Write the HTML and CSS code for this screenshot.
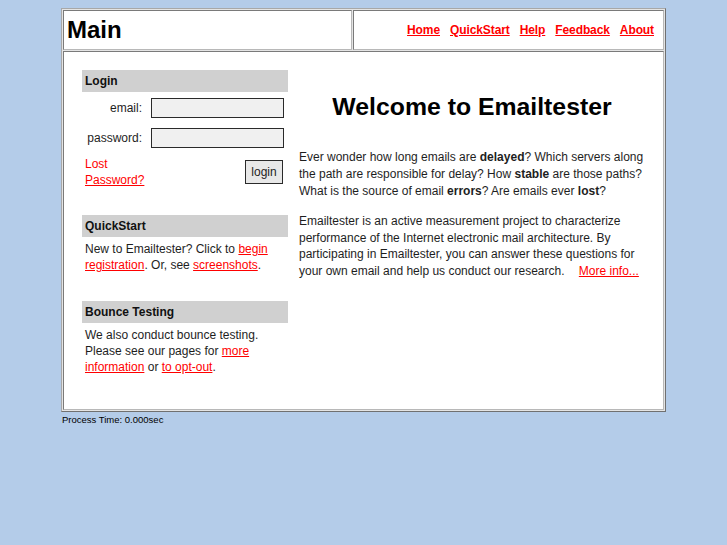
FILE: index.html
```html
<!DOCTYPE html>
<html>
<head>
<meta charset="utf-8">
<title>Emailtester - Main</title>
<link rel="stylesheet" href="styles.css">
</head>
<body>
<div class="frame">
  <div class="cell brand">Main</div>
  <div class="cell nav">
    <a href="#">Home</a>
    <a href="#">QuickStart</a>
    <a href="#">Help</a>
    <a href="#">Feedback</a>
    <a href="#">About</a>
  </div>
  <div class="cell content">
    <div class="sidebar">
      <div class="box-title">Login</div>
      <div class="login-grid">
        <label class="lbl">email:</label>
        <input class="field" type="text">
        <label class="lbl">password:</label>
        <input class="field" type="password">
      </div>
      <div class="lost-row">
        <div class="lost"><span class="plain">Lost</span><br><a href="#">Password?</a></div>
        <button class="btn" type="button">login</button>
      </div>

      <div class="box-title qs">QuickStart</div>
      <div class="box-text">New to Emailtester? Click to <a href="#">begin registration</a>. Or, see <a href="#">screenshots</a>.</div>

      <div class="box-title bt">Bounce Testing</div>
      <div class="box-text">We also conduct bounce testing. Please see our pages for <a href="#">more information</a> or <a href="#">to opt-out</a>.</div>
    </div>
    <div class="main">
      <h1 class="title">Welcome to Emailtester</h1>
      <p class="p1">Ever wonder how long emails are <b>delayed</b>? Which servers along the path are responsible for delay? How <b>stable</b> are those paths? What is the source of email <b>errors</b>? Are emails ever <b>lost</b>?</p>
      <p class="p2">Emailtester is an active measurement project to characterize performance of the Internet electronic mail architecture. By participating in Emailtester, you can answer these questions for your own email and help us conduct our research. <a class="more" href="#">More info...</a></p>
    </div>
  </div>
</div>
<div class="process">Process Time: 0.000sec</div>
</body>
</html>
```
FILE: styles.css
```css
html, body {
  margin: 0;
  padding: 0;
}
body {
  background: #b4cce9;
  padding-top: 8px;
  font-family: "Liberation Sans", Arial, sans-serif;
  color: #1e1e1e;
}
a {
  color: #ff0000;
  text-decoration: underline;
}
.frame {
  width: 605px;
  height: 404px;
  box-sizing: border-box;
  margin: 0 auto;
  border: 1px solid;
  border-color: #a8a8a8 #707070 #707070 #a8a8a8;
  padding: 1px;
  background: #e4e4e4;
  display: grid;
  grid-template-columns: 289px 311px;
  grid-template-rows: 40px 359px;
  gap: 1px;
}
.cell {
  background: #fff;
  box-sizing: border-box;
  border: 1px solid;
  border-color: #7a7a7a #b8b8b8 #b8b8b8 #7a7a7a;
}
.brand {
  display: flex;
  align-items: center;
  padding-left: 3px;
  font-size: 24px;
  font-weight: bold;
  color: #000;
}
.nav {
  display: flex;
  align-items: center;
  justify-content: flex-end;
  gap: 10px;
  padding-right: 9px;
  font-size: 12px;
  font-weight: bold;
  letter-spacing: -0.1px;
}
.content {
  grid-column: 1 / span 2;
  display: flex;
  padding: 18px;
  font-size: 12px;
}
.sidebar {
  width: 206px;
  margin-right: 11px;
  flex-shrink: 0;
}
.box-title {
  height: 22px;
  line-height: 22px;
  background: #d0d0d0;
  padding-left: 3px;
  font-weight: bold;
  color: #111;
}
.login-grid {
  display: grid;
  grid-template-columns: 60px 133px;
  column-gap: 9px;
  row-gap: 10px;
  margin-top: 6px;
  align-items: center;
}
.lbl {
  text-align: right;
  color: #1e1e1e;
}
.field {
  box-sizing: border-box;
  width: 133px;
  height: 20px;
  margin: 0;
  border: 1px solid #2a2a2a;
  background: #f0f0f0;
  padding: 0 2px;
  font: 12px "Liberation Sans", Arial, sans-serif;
}
.lost-row {
  display: flex;
  justify-content: space-between;
  align-items: flex-start;
  margin-top: 8px;
}
.lost {
  padding-left: 3px;
  line-height: 16px;
}
.plain {
  color: #ff0000;
}
.btn {
  box-sizing: border-box;
  width: 38px;
  height: 24px;
  margin: 4px 5px 0 0;
  padding: 0;
  border: 1px solid #2a2a2a;
  background: #e8e8e8;
  font: 12px "Liberation Sans", Arial, sans-serif;
  color: #1e1e1e;
}
.box-title.qs {
  margin-top: 27px;
}
.box-title.bt {
  margin-top: 28px;
}
.box-text {
  margin-top: 4px;
  padding-left: 3px;
  line-height: 16px;
}
.main {
  width: 347px;
}
.title {
  margin: 23px 0 0;
  font-size: 24.8px;
  line-height: 28px;
  text-align: center;
  color: #000;
}
.p1 {
  margin: 28px 0 0;
  line-height: 17px;
}
.p2 {
  margin: 13px 0 0;
  line-height: 16.5px;
}
.more {
  margin-left: 11px;
}
.process {
  width: 605px;
  margin: 2px auto 0;
  padding-left: 1px;
  box-sizing: border-box;
  font-size: 9.5px;
  color: #000;
}
```
